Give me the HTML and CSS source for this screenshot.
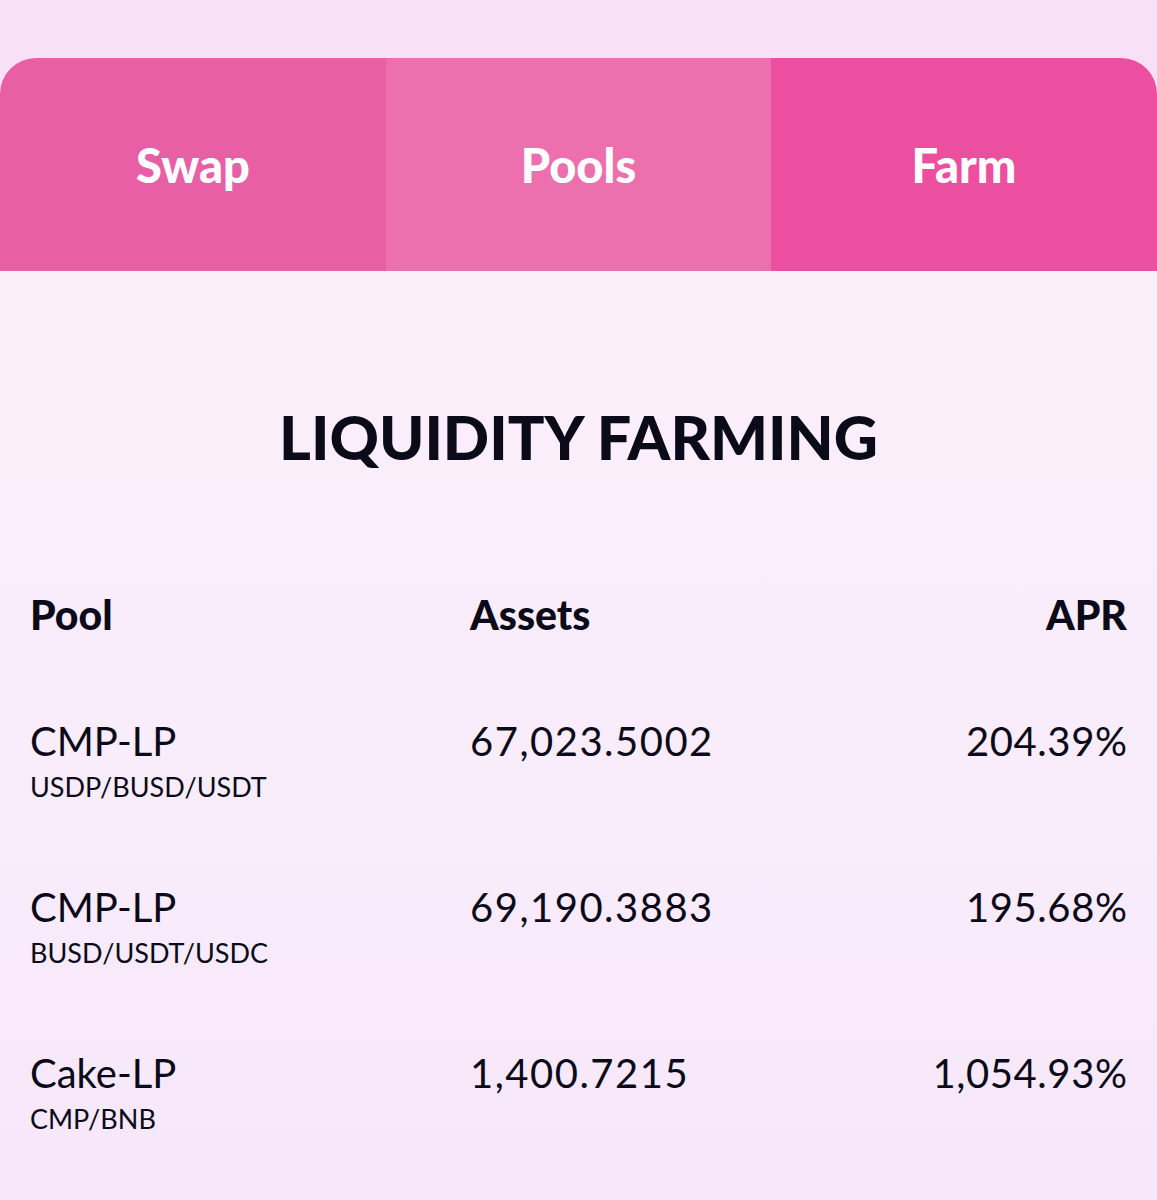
FILE: index.html
```html
<!DOCTYPE html>
<html lang="en">
<head>
<meta charset="utf-8">
<title>Liquidity Farming</title>
<link rel="stylesheet" href="styles.css">
</head>
<body>
<div class="page">
  <nav class="tabs">
    <div class="tab tab-swap">Swap</div>
    <div class="tab tab-pools">Pools</div>
    <div class="tab tab-farm">Farm</div>
  </nav>
  <main class="content">
    <h1 class="title">LIQUIDITY FARMING</h1>
    <div class="table">
      <div class="row head">
        <div class="c-pool">Pool</div>
        <div class="c-assets">Assets</div>
        <div class="c-apr">APR</div>
      </div>
      <div class="row">
        <div class="c-pool"><div class="name">CMP-LP</div><div class="sub">USDP/BUSD/USDT</div></div>
        <div class="c-assets">67,023.5002</div>
        <div class="c-apr">204.39%</div>
      </div>
      <div class="row">
        <div class="c-pool"><div class="name">CMP-LP</div><div class="sub">BUSD/USDT/USDC</div></div>
        <div class="c-assets">69,190.3883</div>
        <div class="c-apr">195.68%</div>
      </div>
      <div class="row">
        <div class="c-pool"><div class="name">Cake-LP</div><div class="sub">CMP/BNB</div></div>
        <div class="c-assets">1,400.7215</div>
        <div class="c-apr">1,054.93%</div>
      </div>
    </div>
  </main>
</div>
</body>
</html>
```
FILE: styles.css
```css
html, body {
  margin: 0;
  padding: 0;
}
body {
  background: #f8e0f6;
  font-family: "Lato", "Liberation Sans", sans-serif;
  color: #0a0a18;
  width: 1157px;
  height: 1200px;
  overflow: hidden;
}
.page {
  padding-top: 58px;
}
.tabs {
  display: grid;
  grid-template-columns: 386px 385px 386px;
  height: 213px;
  border-radius: 36px 36px 0 0;
  overflow: hidden;
}
.tab {
  display: flex;
  align-items: center;
  justify-content: center;
  color: #ffffff;
  font-weight: 900;
  font-size: 47px;
  padding-bottom: 0;
}
.tab-swap { background: #e95fa6; }
.tab-pools { background: #ec70ae; }
.tab-farm { background: #ec4fa0; }
.content {
  background: linear-gradient(180deg, #fbeffb 0%, #f9ecfb 60%, #f6e7fa 100%);
  height: 929px;
  padding: 0 30px;
}
.title {
  margin: 0;
  padding-top: 135px;
  text-align: center;
  font-size: 61px;
  font-weight: 900;
  letter-spacing: 0;
  line-height: 62px;
}
.table {
  margin-top: 122px;
}
.row {
  display: grid;
  grid-template-columns: 440px 1fr 300px;
  height: 166px;
}
.row.head {
  font-weight: 900;
  font-size: 41px;
  height: 128px;
}
.c-apr { text-align: right; }
.row:not(.head) {
  font-size: 40px;
  font-weight: 400;
}
.name { line-height: 46px; }
.sub { font-size: 27px; line-height: 32px; margin-top: 7px; }
.row:not(.head) .c-assets { line-height: 46px; letter-spacing: 1.5px; }
.row:not(.head) .c-apr { line-height: 46px; letter-spacing: 0.6px; margin-right: -0.6px; }
```
